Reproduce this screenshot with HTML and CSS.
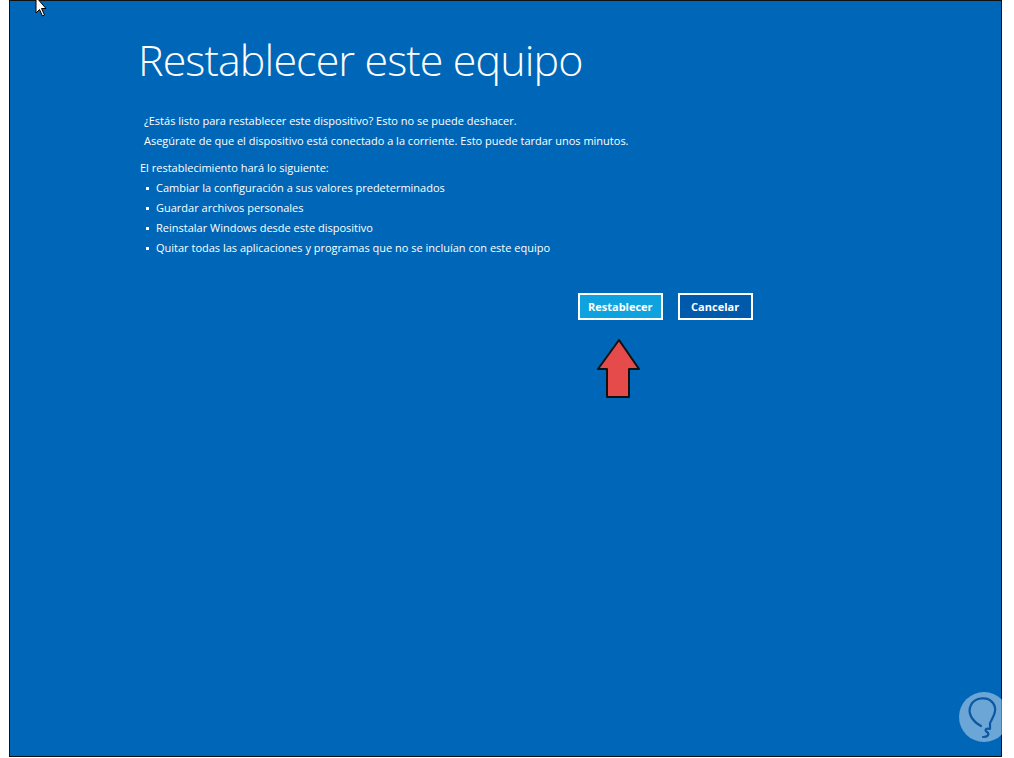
FILE: index.html
```html
<!DOCTYPE html>
<html lang="es">
<head>
  <meta charset="UTF-8">
  <meta name="viewport" content="width=device-width, initial-scale=1.0">
  <title>Restablecer este equipo</title>
  <link rel="stylesheet" href="styles.css">
</head>
<body>
  <div class="screen">
    <div class="content">
      <h1 class="title">Restablecer este equipo</h1>

      <div class="intro">
        <p>¿Estás listo para restablecer este dispositivo? Esto no se puede deshacer.</p>
        <p>Asegúrate de que el dispositivo está conectado a la corriente. Esto puede tardar unos minutos.</p>
      </div>

      <p class="lead">El restablecimiento hará lo siguiente:</p>
      <ul class="steps">
        <li>Cambiar la configuración a sus valores predeterminados</li>
        <li>Guardar archivos personales</li>
        <li>Reinstalar Windows desde este dispositivo</li>
        <li>Quitar todas las aplicaciones y programas que no se incluían con este equipo</li>
      </ul>

      <div class="actions">
        <button class="btn btn-primary">Restablecer</button>
        <button class="btn">Cancelar</button>
      </div>

      <div class="pointer">
        <svg width="44" height="60" viewBox="0 0 44 60">
          <path d="M22 1 L42 30 L32 30 L32 58 L10 58 L10 30 L1 30 Z" fill="#e54b4b" stroke="#111" stroke-width="2" stroke-linejoin="round"/>
        </svg>
      </div>
    </div>

    <!-- mouse cursor -->
    <svg class="cursor" width="14" height="20" viewBox="0 0 14 20">
      <path d="M1 -3 L1 13 L4.5 9.5 L7.5 16 L9.5 15 L6.5 8.5 L11 8.5 Z" fill="#fff" stroke="#000" stroke-width="1"/>
    </svg>

    <!-- watermark -->
    <svg class="watermark" width="52" height="52" viewBox="0 0 52 52">
      <circle cx="26" cy="26" r="25" fill="rgba(255,255,255,0.42)"/>
      <path d="M23 35 C14 30 9 22 13 14 C17 6 30 5 35 12 C40 19 35 26 32 32 L32 38 C28 37 26 39 29 41 C32 43 30 46 25 46" fill="none" stroke="#0d58a3" stroke-width="2.2" stroke-linecap="round" stroke-linejoin="round"/>
    </svg>
  </div>
</body>
</html>
```

FILE: styles.css
```css
/* Page */
body {
  margin: 0;
  background: #fff;
  font-family: 'Open Sans', 'Noto Sans', sans-serif;
}

/* Recovery screen */
.screen {
  position: relative;
  margin-left: 9px;
  width: 993px;
  height: 757px;
  box-sizing: border-box;
  background: #0067b8;
  border: 1px solid #111;
  color: #fff;
}

.content {
  padding: 29px 0 0 130px;
}

.title {
  margin: 0 0 0 -2px;
  font-size: 43px;
  font-weight: 300;
  line-height: 60px;
  letter-spacing: -0.9px;
}

/* Texts */
.intro {
  margin-top: 21px;
  font-size: 11px;
  line-height: 20px;
}

.intro p {
  margin: 0 0 0 4px;
}

.lead {
  margin: 7px 0 0 0;
  font-size: 11px;
  line-height: 20px;
}

.steps {
  list-style: none;
  margin: 0;
  padding: 0 0 0 16px;
  font-size: 11px;
  line-height: 20px;
}

.steps li {
  position: relative;
}

.steps li::before {
  content: '';
  position: absolute;
  left: -10px;
  top: 9px;
  width: 3px;
  height: 3px;
  background: #fff;
}

/* Buttons */
.actions {
  display: flex;
  gap: 15px;
  margin: 35px 0 0 438px;
}

.btn {
  min-width: 75px;
  height: 27px;
  padding: 0 8px;
  border: 2px solid #fff;
  background: #0059aa;
  color: #fff;
  font-family: 'Open Sans', sans-serif;
  font-size: 11px;
  font-weight: 700;
}

.btn-primary {
  background: #0ea2de;
}

.pointer {
  margin: 19px 0 0 457px;
  height: 60px;
}

/* Extras */
.cursor {
  position: absolute;
  left: 25px;
  top: -1px;
}

.watermark {
  position: absolute;
  left: 948px;
  top: 690px;
  overflow: visible;
}
```
